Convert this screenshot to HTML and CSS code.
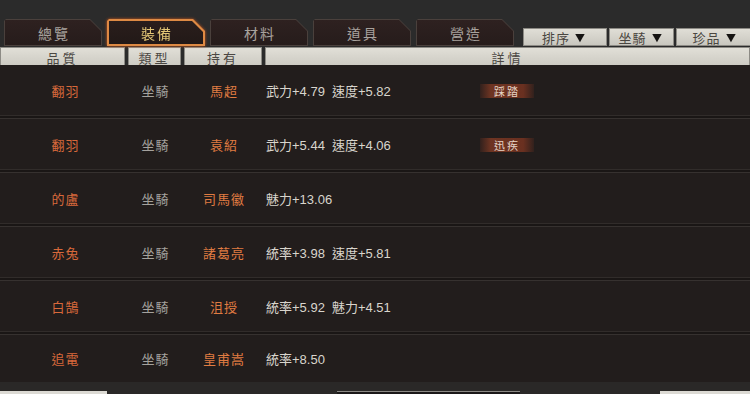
FILE: index.html
```html
<!DOCTYPE html>
<html lang="zh-Hant">
<head>
<meta charset="utf-8">
<title>裝備</title>
<link rel="stylesheet" href="styles.css">
</head>
<body>
<div class="app">
  <div class="topbar"></div>
  <div class="tabbar">
    <div class="tab-wrap"><div class="tab"><div class="tab-face">總覽</div></div></div>
    <div class="tab-wrap active"><div class="tab"><div class="tab-face">裝備</div></div></div>
    <div class="tab-wrap"><div class="tab"><div class="tab-face">材料</div></div></div>
    <div class="tab-wrap"><div class="tab"><div class="tab-face">道具</div></div></div>
    <div class="tab-wrap"><div class="tab"><div class="tab-face">營造</div></div></div>
    <div class="filters">
      <div class="drop drop-sort">排序<span class="arrow">▼</span></div>
      <div class="drop drop-mount">坐騎<span class="arrow">▼</span></div>
      <div class="drop drop-rare">珍品<span class="arrow">▼</span></div>
    </div>
  </div>
  <div class="thead">
    <div class="th">品質</div>
    <div class="th">類型</div>
    <div class="th">持有</div>
    <div class="th">詳情</div>
  </div>
  <div class="rows">
    <div class="row">
      <div class="cell name">翻羽</div>
      <div class="cell kind">坐騎</div>
      <div class="cell owner">馬超</div>
      <div class="cell detail"><span class="stats"><span>武力+4.79</span><span>速度+5.82</span></span><span class="badge">踩踏</span></div>
    </div>
    <div class="row">
      <div class="cell name">翻羽</div>
      <div class="cell kind">坐騎</div>
      <div class="cell owner">袁紹</div>
      <div class="cell detail"><span class="stats"><span>武力+5.44</span><span>速度+4.06</span></span><span class="badge">迅疾</span></div>
    </div>
    <div class="row">
      <div class="cell name">的盧</div>
      <div class="cell kind">坐騎</div>
      <div class="cell owner">司馬徽</div>
      <div class="cell detail"><span class="stats"><span>魅力+13.06</span></span></div>
    </div>
    <div class="row">
      <div class="cell name">赤兔</div>
      <div class="cell kind">坐騎</div>
      <div class="cell owner">諸葛亮</div>
      <div class="cell detail"><span class="stats"><span>統率+3.98</span><span>速度+5.81</span></span></div>
    </div>
    <div class="row">
      <div class="cell name">白鵠</div>
      <div class="cell kind">坐騎</div>
      <div class="cell owner">沮授</div>
      <div class="cell detail"><span class="stats"><span>統率+5.92</span><span>魅力+4.51</span></span></div>
    </div>
    <div class="row last">
      <div class="cell name">追電</div>
      <div class="cell kind">坐騎</div>
      <div class="cell owner">皇甫嵩</div>
      <div class="cell detail"><span class="stats"><span>統率+8.50</span></span></div>
    </div>
  </div>
  <div class="footer">
    <div class="fbar fbar-left"></div>
    <div class="fbar fbar-mid"></div>
    <div class="fbar fbar-right"></div>
  </div>
</div>
</body>
</html>
```
FILE: styles.css
```css
* { box-sizing: border-box; }
html, body { margin: 0; padding: 0; }
body {
  width: 750px;
  height: 394px;
  overflow: hidden;
  background: #2b2b2b;
  font-family: "Liberation Sans", "Noto Sans CJK TC", sans-serif;
}
.app {
  width: 750px;
  height: 394px;
  display: flex;
  flex-direction: column;
  background: #2b2b2b;
}
.topbar { height: 19px; flex: none; }

.tabbar {
  height: 28px;
  flex: none;
  display: flex;
  align-items: flex-end;
  gap: 5px;
  padding-left: 4px;
}
.tab-wrap { width: 98px; height: 28px; flex: none; padding-bottom: 1px; }
.tab {
  height: 27px;
  padding: 1px;
  background: #4a403c;
  clip-path: polygon(2px 0, calc(100% - 12px) 0, 100% 12px, 100% 100%, 0 100%, 0 2px);
}
.tab-face {
  height: 100%;
  background: linear-gradient(#2e2120, #261c1b);
  clip-path: polygon(0 0, calc(100% - 11px) 0, 100% 11px, 100% 100%, 0 100%);
  display: flex;
  align-items: center;
  justify-content: center;
  color: #a8a29d;
  font-size: 14px;
  letter-spacing: 2px;
  padding-left: 2px;
}
.tab-wrap.active { filter: drop-shadow(0 0 1.5px #c8561c); }
.tab-wrap.active .tab { background: #de8a44; padding: 2px; }
.tab-wrap.active .tab-face {
  background: linear-gradient(#2a1e1c, #221917);
  color: #e3c676;
}

.filters {
  margin-left: auto;
  display: flex;
  gap: 2px;
  padding-left: 4px;
  height: 18px;
  align-self: flex-end;
  margin-bottom: 1px;
}
.drop {
  height: 18px;
  background: linear-gradient(#e0ded6, #c9c7bf);
  border: 1px solid #8c8a84;
  display: flex;
  align-items: center;
  justify-content: center;
  color: #4a4641;
  font-size: 13px;
  letter-spacing: 1px;
}
.drop-sort { width: 84px; }
.drop-mount { width: 65px; }
.drop-rare { width: 78px; border-right: none; }
.arrow { color: #151312; font-size: 14px; margin-left: 3px; transform: scaleX(1.15); }

.thead {
  height: 18px;
  flex: none;
  display: grid;
  grid-template-columns: 125px 53px 78px 1fr;
  gap: 3px;
}
.th {
  background: linear-gradient(#e1dfd7, #cbc9c1);
  border: 1px solid #8d8b85;
  display: flex;
  align-items: center;
  justify-content: center;
  color: #4b4743;
  font-size: 13px;
  letter-spacing: 3px;
}

.rows {
  height: 317px;
  flex: none;
  overflow: hidden;
  background: #221d1c;
}
.row {
  height: 54px;
  display: grid;
  grid-template-columns: 125px 53px 78px 1fr;
  gap: 3px;
  align-items: center;
  border-bottom: 1px solid #36312f;
  box-shadow: inset 0 -2px 0 #1a1615, inset 0 -3px 0 #312c2a;
  padding-bottom: 2px;
}
.row.last { height: 48px; padding-top: 1px; border-bottom-color: #3a3634; box-shadow: none; }
.cell { font-size: 13px; }
.name, .kind, .owner { text-align: center; letter-spacing: 1px; }
.name { color: #d8693b; padding-left: 6px; }
.kind { color: #a5a29e; padding-left: 2px; }
.owner { color: #e07c42; padding-left: 2px; }
.detail {
  display: flex;
  align-items: center;
  color: #d9d5cd;
  padding-left: 1px;
}
.stats { width: 214px; display: flex; gap: 7px; }
.badge {
  width: 54px;
  height: 14px;
  display: flex;
  align-items: center;
  justify-content: center;
  font-size: 11px;
  letter-spacing: 2px;
  color: #e6d4c6;
  background: linear-gradient(90deg, rgba(110,48,32,0.2), #6e3422 20%, #6a3020 80%, rgba(110,48,32,0.2));
}

.footer {
  flex: 1;
  display: flex;
  align-items: flex-end;
  background: #2a2827;
}
.fbar { height: 3px; }
.fbar-left { width: 107px; background: #dcdad4; }
.fbar-mid { width: 183px; margin-left: 230px; background: #1a1818; border-top: 1px solid #8a8884; }
.fbar-right { width: 90px; margin-left: auto; background: #dcdad4; }
```
